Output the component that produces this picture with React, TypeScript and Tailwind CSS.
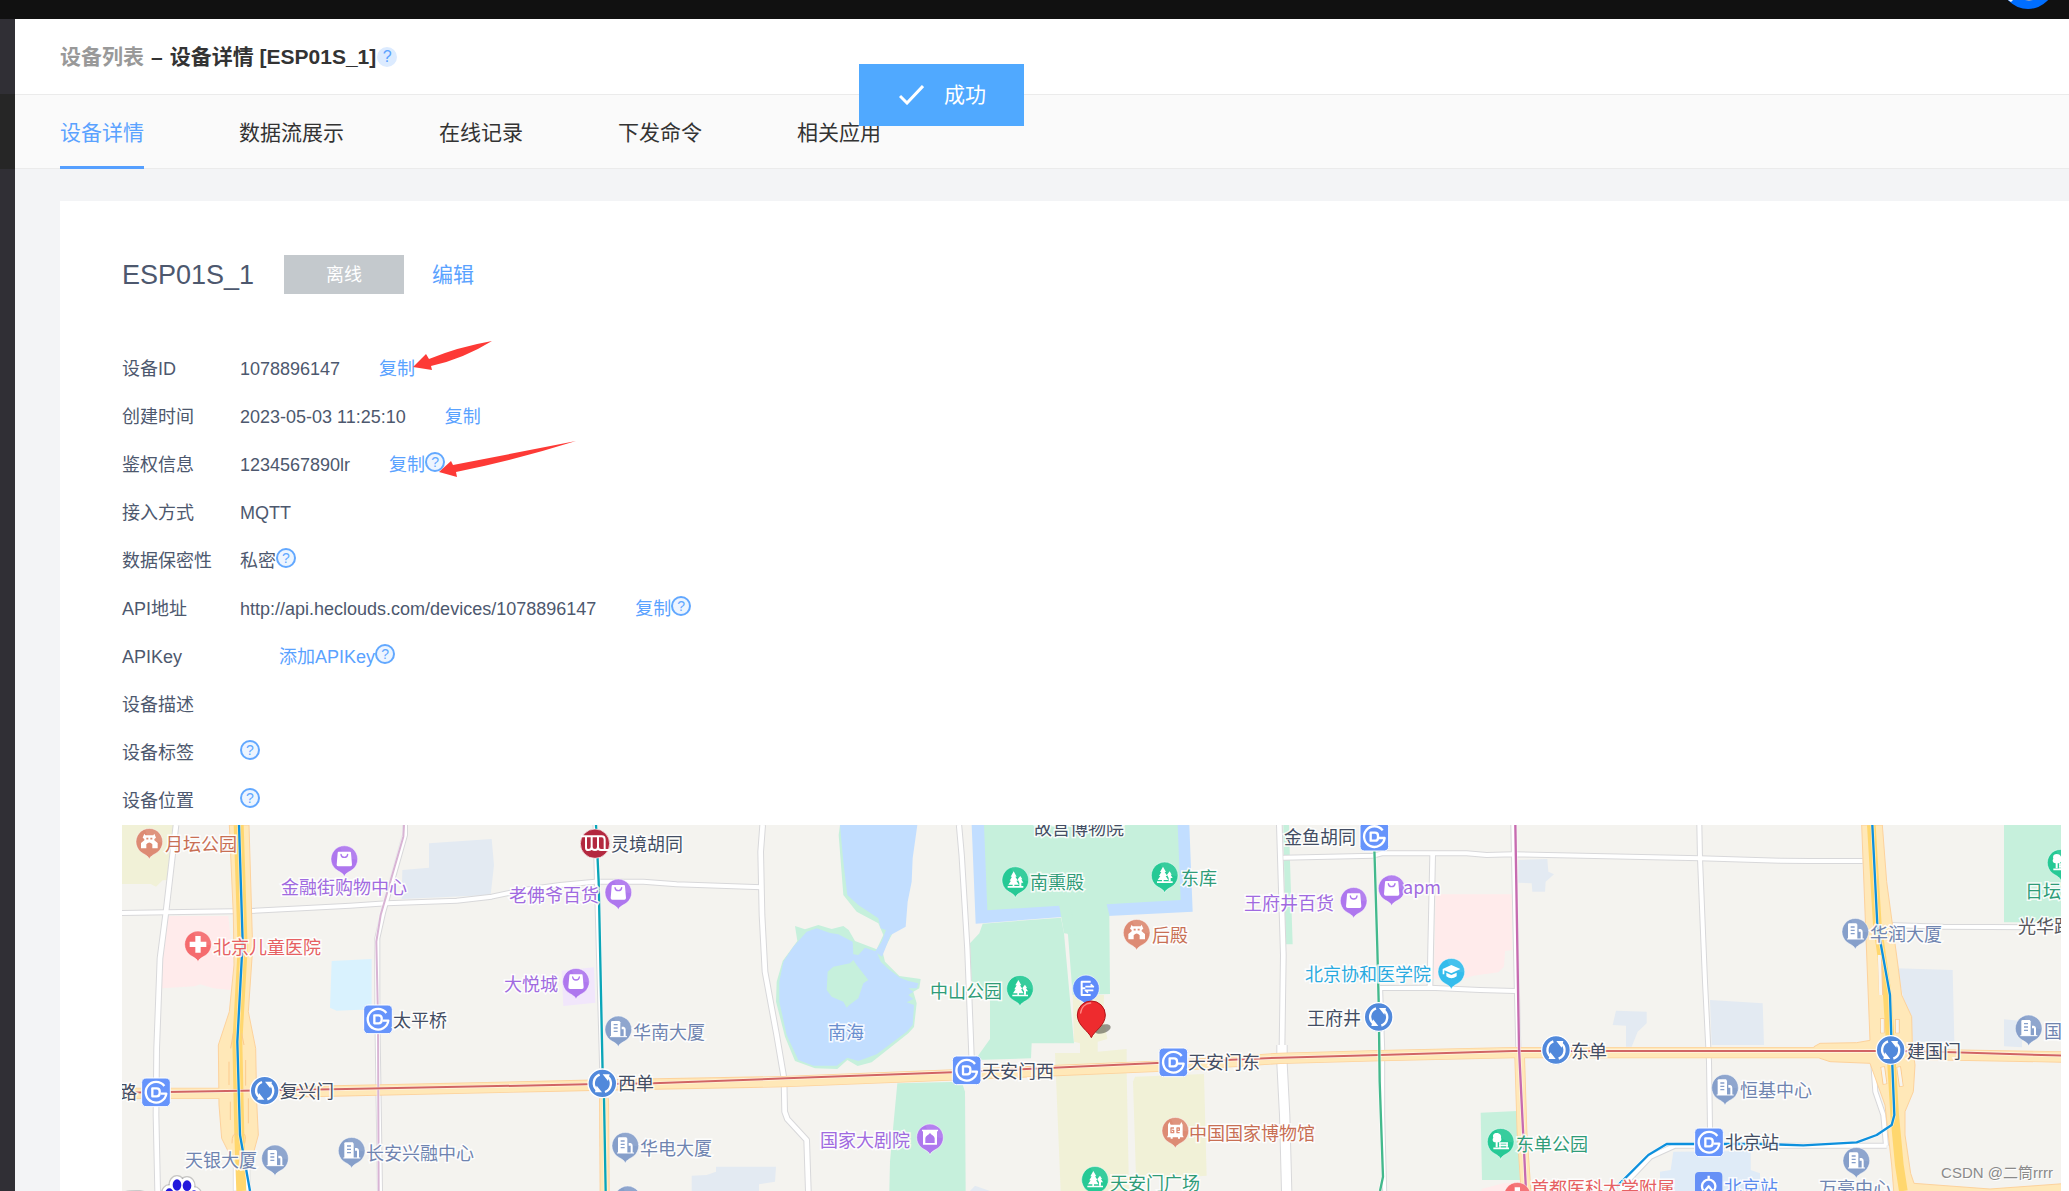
import React from "react";

/* ---------- map data (map units: three units to one CSS pixel) ---------- */

const ORIGIN_X = 36;
const ORIGIN_Y = 30;

type Area = { fill: string; dx?: number; pts: string };

const GREEN = "#c6f0dc";
const WATER = "#c2deff";
const SLATE = "#e3eaf2";
const SAND = "#f1f1d7";
const BASE = "#f4f3ef";

const areas: Area[] = [
  { fill: SAND, pts: "36,30 190,30 180,195 158,196 138,215 122,207 36,207" },
  { fill: SLATE, pts: "957,85 1145,72 1152,150 1142,240 875,252 877,165 957,158" },
  { fill: "#ffebeb", pts: "175,303 355,303 370,450 362,525 310,520 270,508 255,514 155,520 158,430" },
  { fill: "#d9f2fe", pts: "665,438 785,432 785,583 680,587 660,578" },
  { fill: "#f1e6fb", pts: "1355,467 1452,457 1456,563 1360,573" },
  // lakes and their banks
  { fill: GREEN, dx: 1350, pts: "705,333 735,343 775,330 815,342 850,333 866,345 885,378 950,403 970,360 955,325 890,290 850,240 836,60 840,30 1000,30 1000,350 968,412 975,440 1018,483 1082,492 1078,520 1060,530 1070,565 1062,636 1045,655 935,742 893,753 862,735 832,762 765,760 705,738 675,665 648,560 650,500 668,438 712,378" },
  { fill: WATER, dx: 1350, pts: "840,30 1072,30 1058,130 1055,200 1043,260 1037,335 992,360 966,425 945,410 965,380 978,345 962,340 955,310 895,270 862,240 850,140" },
  { fill: WATER, dx: 1350, pts: "770,340 810,354 835,358 878,380 880,418 895,420 915,398 950,410 962,440 985,462 1020,488 1045,498 1075,505 1070,520 1045,520 1060,530 1045,540 1060,552 1040,562 1062,570 1058,630 1040,650 950,718 895,738 862,728 830,752 760,752 715,735 680,660 658,560 658,500 670,440 700,395 740,350" },
  { fill: GREEN, dx: 1350, pts: "803,470 820,455 870,445 880,435 890,450 925,495 910,505 895,550 868,570 860,578 850,560 815,545 800,525" },
  { fill: GREEN, dx: 1350, pts: "1012,805 1205,800 1215,830 1217,1128 988,1128 990,1040 1003,900" },
  { fill: SLATE, dx: 1350, pts: "468,1055 648,1055 645,1100 597,1108 597,1128 395,1128 395,1082 440,1080 468,1070" },
  // palace museum, moat and gardens
  { fill: WATER, dx: 2460, pts: "125,30 778,30 788,290 533,303 395,306 137,326" },
  { fill: GREEN, dx: 2460, pts: "162,30 743,30 752,255 530,268 538,300 540,537 428,540 414,360 388,272 172,286" },
  { fill: GREEN, dx: 2460, pts: "158,326 393,308 402,355 432,685 305,685 303,730 135,735 180,672 180,555 125,500 120,385 148,355" },
  { fill: GREEN, dx: 2460, pts: "388,272 420,272 440,360 402,355" },
  { fill: SAND, dx: 2460, pts: "428,540 522,540 520,600 532,672 503,680 503,710 590,702 590,770 597,1128 392,1128 375,714 450,714 450,685 432,680" },
  { fill: SAND, dx: 2460, pts: "615,785 822,777 830,1082 710,1090 618,1088 609,800" },
  { fill: SLATE, dx: 2460, pts: "120,1128 135,1112 180,1128" },
  { fill: GREEN, dx: 2460, pts: "1060,30 1077,30 1080,140 1088,388 1067,388" },
  { fill: "#ffebeb", dx: 3510, pts: "467,238 697,238 697,405 675,408 672,455 655,472 580,482 520,500 462,490" },
  { fill: SLATE, dx: 3510, pts: "715,135 802,132 805,170 822,178 797,200 795,230 757,230 755,205 715,203" },
  { fill: SLATE, dx: 3510, pts: "1008,587 1100,590 1100,625 1073,650 1055,695 1038,695 1038,632 998,630" },
  { fill: SLATE, dx: 3510, pts: "1290,555 1448,565 1452,690 1295,690" },
  { fill: GREEN, dx: 3510, pts: "602,893 712,888 720,1095 606,1095" },
  { fill: "#ffebeb", dx: 3510, pts: "605,1122 670,1105 720,1105 720,1128 605,1128" },
  { fill: "#dfebf7", dx: 3510, pts: "1180,1010 1412,1008 1412,1065 1440,1075 1440,1128 1140,1128 1140,1070 1172,1065" },
  { fill: SLATE, dx: 4590, pts: "770,460 938,465 943,680 820,680" },
  { fill: GREEN, dx: 4590, pts: "1092,30 1270,30 1270,322 1092,322" },
  { fill: SLATE, dx: 4590, pts: "1092,613 1146,618 1146,697 1092,694" },
];

type Line = { pts: string; w: number };

const whiteRoads: Line[] = [
  { w: 14, pts: "198,30 168,290 150,430 140,700 138,900 143,1128" },
  { w: 12, pts: "36,294 170,292 420,288 720,272 830,265 1040,257 1145,245 1240,225 1350,210 1455,200 1600,200 1700,208 1955,217" },
  { w: 12, pts: "885,30 885,60 820,290 802,370 802,600 810,1128" },
  { w: 9, pts: "1455,30 1462,300 1475,760" },
  { w: 14, pts: "1958,30 1952,110 1956,300 1965,470 2000,660 2022,790 2024,890 2032,912 2090,975 2095,1128" },
  { w: 13, pts: "2547,30 2555,120 2572,400 2586,760" },
  { w: 14, pts: "3508,30 3520,420 3516,700" },
  { w: 28, pts: "3516,690 3516,745 3524,900 3530,1128" },
  { w: 12, pts: "3520,128 3790,122 3815,115 4070,115 4130,120 4210,118 4770,130 5010,137 5100,138 5258,138" },
  { w: 12, pts: "4210,30 4220,500 4225,700" },
  { w: 14, pts: "3968,120 3962,400 3960,515" },
  { w: 12, pts: "3810,519 3960,518 4110,525 4215,528" },
  { w: 9, pts: "3812,525 3818,700 3818,900 3824,1128" },
  { w: 12, pts: "4768,30 4770,130 4785,500 4797,740 4800,940" },
  { w: 12, pts: "5335,330 5500,335 5860,337" },
  { w: 12, pts: "4530,1122 4622,1025 4695,992 4760,992 5330,992" },
  { w: 12, pts: "5290,745 5296,830 5320,900 5328,992" },
];

const yellowRoads: Line[] = [
  { w: 30, pts: "36,835 330,835 670,828 1350,813 1477,810 2020,800 2570,778 3190,752 3510,730 3810,722 4210,713 5340,713 5420,718 5860,726" },
  { w: 26, pts: "1482,850 1484,1128" },
  { w: 28, pts: "4229,725 4236,950 4248,1128" },
];

const westRing =
  "358,30 417,30 428,400 415,590 437,700 440,860 445,960 418,1060 380,1060 335,970 327,870 325,690 358,590 372,450 370,300";
const eastRing =
  "5255,30 5317,30 5330,200 5365,460 5375,540 5405,605 5407,690 5415,750 5410,830 5385,890 5385,960 5402,1075 5412,1105 5640,1122 5860,1106 5860,1140 5352,1140 5345,1050 5325,870 5280,745 5160,740 5130,730 5110,713 5112,695 5130,685 5240,683 5280,676";

type Rail = { c: string; w: number; pts: string };
const rails: Rail[] = [
  { c: "#d8b4d4", w: 6, pts: "882,30 880,65 812,300 799,380 804,613 806,1128" },
  { c: "#0aa5b8", w: 7, pts: "1458,30 1466,200 1478,780 1482,850 1487,1128" },
  { c: "#d16464", w: 6, pts: "36,833 464,826 670,823 1430,808 1630,805 2030,790 2570,770 2830,758 3190,742 3510,728 3810,720 4210,708 5342,708 5480,710 5860,722" },
  { c: "#c76bb0", w: 7, pts: "4216,30 4227,700 4248,1128" },
  { c: "#43b98c", w: 7, pts: "3793,100 3802,400 3806,560 3809,800 3819,1085 3810,1128" },
  { c: "#0d90dd", w: 7, pts: "387,30 398,380 382,680 390,960 420,1128" },
  { c: "#0d90dd", w: 7, pts: "5287,30 5302,330 5340,540 5345,700 5353,900 5345,930 5300,960 5240,982 5080,991 4960,987 4670,987 4615,1020 4520,1115" },
];

type PinKind = "gate" | "bag" | "cross" | "building" | "tree" | "theatre" | "museum" | "school" | "park";
const pinColor: Record<PinKind, string> = {
  gate: "#dd8b74",
  museum: "#dd8b74",
  bag: "#ae77ee",
  theatre: "#ae77ee",
  cross: "#f56b6e",
  building: "#869fca",
  tree: "#26c995",
  park: "#26c995",
  school: "#35bcec",
};
const pins: [PinKind, number, number][] = [
  ["gate", 118, 80],
  ["bag", 703, 132],
  ["cross", 264, 388],
  ["bag", 1398, 500],
  ["building", 495, 1030],
  ["building", 725, 1007],
  ["bag", 1525, 232],
  ["building", 1525, 643],
  ["building", 1546, 992],
  ["building", 1553, 1153],
  ["theatre", 2460, 967],
  ["tree", 2716, 195],
  ["tree", 3164, 181],
  ["tree", 2730, 521],
  ["tree", 2955, 1094],
  ["gate", 3080, 353],
  ["museum", 3196, 947],
  ["bag", 3731, 257],
  ["bag", 3845, 220],
  ["school", 4024, 470],
  ["park", 4172, 980],
  ["cross", 4222, 1142],
  ["building", 4845, 818],
  ["building", 5236, 350],
  ["building", 5756, 640],
  ["building", 5239, 1037],
  ["park", 5852, 143],
];

const stations: [number, number][] = [
  [138, 832],
  [804, 613],
  [2570, 766],
  [3190, 742],
  [3793, 65],
  [4797, 982],
];
const interchanges: [number, number][] = [
  [464, 827],
  [1477, 805],
  [3806, 606],
  [4338, 705],
  [5342, 705],
];

const INK = "text-[#434d63]";
const BROWN = "text-[#c86f54]";
const PURPLE = "text-[#a06ae0]";
const PINE = "text-[#2f9c78]";
const STEEL = "text-[#6f84b0]";
const RED = "text-[#e66062]";

const labels: [string, number, number, string][] = [
  ["月坛公园", 165, 83, BROWN],
  ["金融街购物中心", 512, 213, PURPLE],
  ["北京儿童医院", 309, 393, RED],
  ["老佛爷百货", 1197, 236, PURPLE],
  ["大悦城", 1181, 505, PURPLE],
  ["太平桥", 848, 611, INK],
  ["复兴门", 511, 824, INK],
  ["路", 26, 828, INK],
  ["天银大厦", 225, 1033, STEEL],
  ["长安兴融中心", 769, 1012, STEEL],
  ["灵境胡同", 1502, 83, INK],
  ["华南大厦", 1569, 647, STEEL],
  ["西单", 1523, 800, INK],
  ["华电大厦", 1591, 996, STEEL],
  ["南海", 2155, 649, "text-[#6a8fcf]"],
  ["中山公园", 2459, 526, PINE],
  ["国家大剧院", 2130, 971, PURPLE],
  ["天安门西", 2615, 764, INK],
  ["故宫博物院", 2772, 37, INK],
  ["南熏殿", 2760, 199, PINE],
  ["东库", 3212, 186, PINE],
  ["后殿", 3125, 357, BROWN],
  ["王府井百货", 3403, 262, PURPLE],
  ["天安门东", 3235, 739, INK],
  ["中国国家博物馆", 3238, 952, BROWN],
  ["天安门广场", 2999, 1100, PINE],
  ["金鱼胡同", 3521, 62, INK],
  ["apm", 3880, 214, PURPLE],
  ["北京协和医学院", 3584, 473, "text-[#2aaae0]"],
  ["王府井", 3592, 605, INK],
  ["东单", 4384, 704, INK],
  ["东单公园", 4219, 984, PINE],
  ["首都医科大学附属", 4264, 1115, RED],
  ["恒基中心", 4891, 821, STEEL],
  ["北京站", 4844, 979, INK],
  ["北京站", 4841, 1114, "text-[#5b8cee]"],
  ["华润大厦", 5280, 354, STEEL],
  ["建国门", 5390, 705, INK],
  ["万豪中心", 5128, 1116, STEEL],
  ["日坛", 5744, 226, PINE],
  ["光华路", 5724, 331, "text-[#55565c]"],
  ["国", 5801, 644, STEEL],
];

/* ---------- map drawing ---------- */

function PinGlyph({ kind }: { kind: PinKind }) {
  const color = pinColor[kind];
  switch (kind) {
    case "bag":
      return (
        <g>
          <path d="M-17 -22 H17 Q20 -22 20 -18 L23 17 Q23 22 18 22 H-18 Q-23 22 -23 17 L-20 -18 Q-20 -22 -17 -22Z" fill="#fff" />
          <path d="M-10 -14 C-9 -2 9 -2 10 -14" fill="none" stroke={color} strokeWidth="4" strokeLinecap="round" />
        </g>
      );
    case "cross":
      return <path d="M-8 -25 H8 V-8 H25 V8 H8 V25 H-8 V8 H-25 V-8 H-8Z" fill="#fff" />;
    case "building":
      return (
        <g>
          <path d="M-22 22 V-22 Q-22 -25 -18 -25 H3 L6 -21 V22Z" fill="#fff" />
          <path d="M10 -8 H16 Q22 -6 22 0 V22 H16 V0 H10Z" fill="#fff" />
          <path d="M-14 -14 H-2 M-14 -4 H-2 M-14 6 H-2" stroke={color} strokeWidth="4" />
          <path d="M-25 22 H26" stroke="#fff" strokeWidth="3" />
        </g>
      );
    case "tree":
      return (
        <g fill="#fff">
          <path d="M-5 -26 L4 -10 H0 L8 2 H3 L11 14 H-3 V18 H24 V23 H-23 V18 H-8 V14 H-21 L-13 2 H-17 L-10 -10 H-14Z" />
          <path d="M15 -12 L21 -2 H18 L24 8 H18 V18 H12 V8 L7 -2Z" />
        </g>
      );
    case "gate":
      return (
        <g>
          <path d="M-15 -24 L-12 -19 H12 L15 -24 L20 -12 L15 -8 V-4 L25 4 V20 H9 V8 Q0 -3 -9 8 V20 H-25 V4 L-15 -4 V-8 L-20 -12Z" fill="#fff" />
          <path d="M-9 -9 H-3 M3 -9 H9" stroke={color} strokeWidth="5" />
        </g>
      );
    case "museum":
      return (
        <g>
          <path d="M-22 -18 L-18 -26 L-14 -18 H14 L18 -26 L22 -18 V14 L25 20 H14 V24 H8 V20 H-8 V24 H-14 V20 H-25 L-22 14Z" fill="#fff" />
          <path d="M-4 -8 H-13 V6 H-5 V-1 H-10 M5 -1 H12 V-8 H5 V6 H13" fill="none" stroke={color} strokeWidth="4" />
        </g>
      );
    case "theatre":
      return (
        <g>
          <path d="M-24 -23 H24 V-18 H21 V22 H-21 V-18 H-24Z" fill="#fff" />
          <path d="M0 -14 C3 -7 13 -6 14 3 V17 H-14 V3 C-13 -6 -3 -7 0 -14Z" fill={color} />
        </g>
      );
    case "school":
      return (
        <g fill="#fff">
          <path d="M0 -20 L27 -8 L0 5 L-21 -4 V8 H-26 V-8Z" />
          <path d="M-15 3 L0 10 L16 3 V14 Q0 26 -15 14Z" />
        </g>
      );
    case "park":
      return (
        <g>
          <path d="M-12 -26 C-2 -26 3 -18 1 -12 C5 -4 -2 3 -9 2 V17 H-15 V2 C-24 2 -26 -7 -22 -12 C-25 -20 -20 -26 -12 -26Z" fill="#fff" />
          <path d="M-5 4 H22 M-5 11 H22 M-22 20 H25" stroke="#fff" strokeWidth="5" />
          <path d="M-2 4 V20 M19 4 V20" stroke="#fff" strokeWidth="4" />
        </g>
      );
  }
}

function Pin({ kind, x, y }: { kind: PinKind; x: number; y: number }) {
  return (
    <g transform={`translate(${x} ${y})`}>
      <path
        d="M0 53 C-3 43 -10 41 -18 36 A40 40 0 1 1 18 36 C10 41 3 43 0 53Z"
        fill={pinColor[kind]}
        stroke="#fff"
        strokeWidth="2"
        strokeOpacity="0.7"
      />
      <path d="M-13 -38 A40 40 0 0 1 40 3 C22 2 -10 -10 -13 -38Z" fill="#fff" opacity="0.08" />
      <PinGlyph kind={kind} />
    </g>
  );
}

function Station({ x, y }: { x: number; y: number }) {
  return (
    <g transform={`translate(${x} ${y})`}>
      <rect x="-43" y="-43" width="86" height="86" rx="13" fill="#6694fb" stroke="#fff" strokeWidth="3" />
      <path d="M25 -19 A31 31 0 1 0 31 4 H14" fill="none" stroke="#fff" strokeWidth="7" />
      <path d="M-11 -12 H2 Q11 -12 11 -3 V3 Q11 12 2 12 H-11Z" fill="none" stroke="#fff" strokeWidth="7" />
    </g>
  );
}

function Interchange({ x, y }: { x: number; y: number }) {
  return (
    <g transform={`translate(${x} ${y})`}>
      <circle r="43" fill="#5189db" stroke="#fff" strokeWidth="4" />
      <path d="M-8 -26 A27 27 0 0 0 -16 20" fill="none" stroke="#fff" strokeWidth="7" />
      <path d="M8 26 A27 27 0 0 0 16 -20" fill="none" stroke="#fff" strokeWidth="7" />
      <path d="M-22 27 L-17 7 L-1 27Z M22 -27 L17 -7 L1 -27Z" fill="#fff" />
    </g>
  );
}

function MapDrawing() {
  return (
    <svg
      aria-hidden="true"
      viewBox="36 30 5817 1098"
      className="absolute left-0 top-0 h-[366px] w-[1939px] max-w-none"
      strokeLinejoin="round"
    >
      <rect x="36" y="30" width="5817" height="1098" fill={BASE} />
      {areas.map((a, i) => (
        <polygon key={i} points={a.pts} fill={a.fill} transform={`translate(${a.dx ?? 0} 0)`} />
      ))}
      <g fill="none">
        {whiteRoads.map((r, i) => (
          <polyline key={i} points={r.pts} stroke="#d8d8da" strokeWidth={r.w + 6} />
        ))}
        {whiteRoads.map((r, i) => (
          <polyline key={i} points={r.pts} stroke="#ffffff" strokeWidth={r.w} />
        ))}
        {yellowRoads.map((r, i) => (
          <polyline key={i} points={r.pts} stroke="#fdd29c" strokeWidth={r.w + 4} />
        ))}
      </g>
      <rect x="370" y="1040" width="50" height="88" fill="#fff" stroke="#d8d8da" strokeWidth="2" />
      <polygon points={westRing} fill="#ffe8b8" stroke="#fdd29c" strokeWidth="3" />
      <polygon points={eastRing} fill="#ffe8b8" stroke="#fdd29c" strokeWidth="3" />
      <g fill="none">
        {yellowRoads.map((r, i) => (
          <polyline key={i} points={r.pts} stroke="#ffe8b8" strokeWidth={r.w - 1} />
        ))}
        <polyline points="386,30 398,400 382,680 388,960 394,1128" stroke="#ffd76e" strokeWidth="30" />
        <polyline points="5284,30 5302,330 5332,540 5342,700 5354,900 5368,1050 5380,1128" stroke="#ffd76e" strokeWidth="26" />
        <path
          d="M357 740V810 M407 735V812 M361 860V915 M415 850V925 M362 700L370 655 M395 655L402 690 M366 985Q366 950 382 958 M400 955Q410 960 404 985"
          stroke="#fcca8d"
          strokeWidth="3"
        />
        <path
          d="M5310 430L5314 540 M5317 610V655 M5362 612V655 M5318 755L5325 808 M5366 755L5374 815"
          stroke="#fcca8d"
          strokeWidth="14"
        />
        <path
          d="M5308 420L5312 540 M5317 612V653 M5362 614V653 M5318 757L5325 806 M5366 757L5374 813"
          stroke="#f7f5f0"
          strokeWidth="9"
        />
        {rails.map((r, i) => (
          <g key={i}>
            <polyline points={r.pts} stroke="#fff" strokeOpacity="0.6" strokeWidth={r.w + 4} />
            <polyline points={r.pts} stroke={r.c} strokeWidth={r.w} />
          </g>
        ))}
      </g>

      {stations.map(([x, y]) => (
        <Station key={`${x}-${y}`} x={x} y={y} />
      ))}
      {interchanges.map(([x, y]) => (
        <Interchange key={`${x}-${y}`} x={x} y={y} />
      ))}

      <g transform="translate(1455 86)">
        <circle r="44" fill="#b3283f" stroke="#fff" strokeWidth="2" />
        <path
          d="M-42 -22 H20 Q29 -22 29 -12 V19 H43 M-27 -22 V12 Q-27 19 -20 19 Q-10 19 -10 10 V-22 M-10 10 Q-10 19 0 19 Q9 19 9 10 V-22 M9 10 Q9 19 18 19 H29"
          fill="none"
          stroke="#fff"
          strokeWidth="6"
        />
      </g>

      <g transform="translate(4796 1112)">
        <rect x="-41" y="-41" width="82" height="82" rx="12" fill="#6690f6" />
        <path d="M-16 14 A20 20 0 1 1 16 14 M0 -30 V-20 M-12 16 L0 2 L12 16" fill="none" stroke="#fff" strokeWidth="7" />
      </g>

      {pins.map(([kind, x, y]) => (
        <Pin key={`${x}-${y}`} kind={kind} x={x} y={y} />
      ))}

      <g transform="translate(2928 520)">
        <path d="M0 53 C-3 43 -10 41 -18 36 A40 40 0 1 1 18 36 C10 41 3 43 0 53Z" fill="#5f8bfa" stroke="#fff" strokeWidth="2" />
        <path d="M14 -20 H-13 V20 H14 M-13 0 H-2" fill="none" stroke="#fff" strokeWidth="6" />
        <path d="M-2 -5 H22 L14 -12 M22 6 H-2 L6 13" fill="none" stroke="#fff" strokeWidth="5" />
      </g>

      <g transform="translate(2944 600)">
        <ellipse cx="34" cy="42" rx="25" ry="13" fill="#55554a" opacity="0.6" transform="rotate(-18 34 42)" />
        <path d="M0 68 C-8 48 -42 32 -42 0 A42 42 0 0 1 42 0 C42 32 8 48 0 68Z" fill="#ee2b2e" stroke="#b01217" strokeWidth="3" />
        <path d="M-32 -6 C-30 -26 -16 -35 -2 -36" fill="none" stroke="#ff8a85" strokeWidth="4" strokeLinecap="round" />
      </g>

      <g fill="#9a9a9a" stroke="#9a9a9a" strokeOpacity="0.5" strokeWidth="26">
        <ellipse cx="178" cy="1134" rx="12" ry="14" />
        <ellipse cx="252" cy="1140" rx="12" ry="14" />
        <ellipse cx="201" cy="1110" rx="13" ry="17" />
        <ellipse cx="231" cy="1112" rx="13" ry="16" />
      </g>
      <g fill="#fff" stroke="#fff" strokeWidth="18">
        <ellipse cx="178" cy="1134" rx="12" ry="14" />
        <ellipse cx="252" cy="1140" rx="12" ry="14" />
        <ellipse cx="201" cy="1110" rx="13" ry="17" />
        <ellipse cx="231" cy="1112" rx="13" ry="16" />
      </g>
      <g fill="#2319dc">
        <ellipse cx="178" cy="1134" rx="12" ry="14" />
        <ellipse cx="252" cy="1140" rx="12" ry="14" />
        <ellipse cx="201" cy="1110" rx="13" ry="17" />
        <ellipse cx="231" cy="1112" rx="13" ry="16" />
      </g>
      <path d="M46 1128 Q60 1124 90 1125 L104 1128Z" fill="#c9c9c9" />
    </svg>
  );
}

function DeviceMap() {
  return (
    <div className="relative mr-2 min-h-[366px] flex-1 overflow-hidden bg-[#f4f3ef]">
      <MapDrawing />
      {labels.map(([text, x, y, color], i) => (
        <span
          key={i}
          className={`absolute -translate-y-1/2 whitespace-nowrap font-['Noto_Sans_CJK_SC',sans-serif] text-lg leading-6 [-webkit-text-stroke:3px_rgba(255,255,255,0.85)] [paint-order:stroke] ${color}`}
          style={{ left: Math.round((x - ORIGIN_X) / 3), top: Math.round((y - ORIGIN_Y) / 3) }}
        >
          {text}
        </span>
      ))}
    </div>
  );
}

/* ---------- page ---------- */

function Help() {
  return (
    <button
      type="button"
      aria-label="帮助"
      className="flex size-5 shrink-0 items-center justify-center rounded-full border-2 border-[#62a8ff] bg-[#edf5ff] text-sm leading-none text-[#62a8ff]"
    >
      ?
    </button>
  );
}

type Info = { label: string; value?: string; action?: string; help?: boolean; arrow?: "short" | "long" };

const info: Info[] = [
  { label: "设备ID", value: "1078896147", action: "复制", arrow: "short" },
  { label: "创建时间", value: "2023-05-03 11:25:10", action: "复制" },
  { label: "鉴权信息", value: "1234567890lr", action: "复制", help: true, arrow: "long" },
  { label: "接入方式", value: "MQTT" },
  { label: "数据保密性", value: "私密", help: true },
  { label: "API地址", value: "http://api.heclouds.com/devices/1078896147", action: "复制", help: true },
  { label: "APIKey", action: "添加APIKey", help: true },
  { label: "设备描述" },
  { label: "设备标签", help: true },
  { label: "设备位置", help: true },
];

function Arrow({ kind }: { kind: "short" | "long" }) {
  return kind === "short" ? (
    <svg aria-hidden="true" viewBox="0 0 80 30" className="absolute -top-1 left-[34px] h-[30px] w-20">
      <path d="M0 26 L13 13 L16 18 Q45 6 79 0 Q50 18 18 25 L19 29Z" fill="#fd3a36" />
    </svg>
  ) : (
    <svg aria-hidden="true" viewBox="0 0 138 38" className="absolute left-[50px] top-0 z-10 h-[38px] w-[138px]">
      <path d="M0 31 L12 20 L14 24 L137 0 Q80 18 17 31 L18 36Z" fill="#fd3a36" />
    </svg>
  );
}

function InfoRow({ label, value, action, help, arrow }: Info) {
  return (
    <div className="flex h-12 items-center">
      <dt className="w-[118px] shrink-0">{label}</dt>
      <dd className="flex items-center">
        {value && <span>{value}</span>}
        {action && (
          <span className="relative ml-[39px] flex h-12 items-center">
            <button type="button" className="text-[#5aa2ff]">
              {action}
            </button>
            {arrow && <Arrow kind={arrow} />}
          </span>
        )}
        {help && (
          <span className="pb-1.5">
            <Help />
          </span>
        )}
      </dd>
    </div>
  );
}

const tabs = ["设备详情", "数据流展示", "在线记录", "下发命令", "相关应用"];

export default function App() {
  return (
    <div className="relative flex h-screen flex-col overflow-hidden bg-white font-['Liberation_Sans','Noto_Sans_CJK_SC',sans-serif] text-lg leading-6 text-[#4d586e]">
      <div className="flex h-[19px] shrink-0 justify-end overflow-hidden bg-[#111111] pr-3.5">
        <svg aria-hidden="true" viewBox="0 0 54 19" className="h-[19px] w-[54px]">
          <circle cx="27" cy="-18" r="27" fill="#006eff" />
          <path d="M7 0 H12 L10 2Z" fill="#e8eef5" />
          <path d="M24 0 H32 L28 1Z" fill="#8da0c4" />
        </svg>
      </div>

      <div className="flex min-h-0 flex-1">
        <aside className="flex w-[15px] shrink-0 flex-col bg-[#302f35]">
          <div className="mt-[75px] h-[75px] bg-[#262626]" />
        </aside>

        <main className="flex min-w-0 flex-1 flex-col bg-[#f3f4f6]">
          <header className="flex h-[75px] shrink-0 items-center bg-white pl-[45px] text-[21px] font-bold leading-7 text-[#333333]">
            <a href="#devices" className="text-[#999999]">
              设备列表
            </a>
            <span className="mx-[7px]">–</span>
            <h1>设备详情 [ESP01S_1]</h1>
            <button
              type="button"
              aria-label="帮助"
              className="ml-px flex size-5 items-center justify-center rounded-full bg-[#dcebff] text-base font-normal leading-none text-[#5aa2ff]"
            >
              ?
            </button>
          </header>

          <nav className="flex h-[75px] shrink-0 gap-[95px] border-y border-[#ebebeb] bg-[#fafafa] pl-[45px] text-[21px] leading-7 text-[#333333]">
            {tabs.map((t, i) => (
              <button
                key={t}
                type="button"
                className={
                  i === 0
                    ? "-mb-px border-b-3 border-[#559fff] pt-[5px] text-[#5aa2ff]"
                    : "-mb-px border-b-3 border-transparent pt-[5px]"
                }
              >
                {t}
              </button>
            ))}
          </nav>

          <section className="ml-[45px] mt-8 flex min-h-0 flex-1 flex-col bg-white pl-[62px] pt-[54px]">
            <div className="flex h-[39px] shrink-0 items-center">
              <h2 className="text-[27px] leading-8">ESP01S_1</h2>
              <span className="ml-[30px] flex h-full w-[120px] items-center justify-center bg-[#c4c9cd] text-white">离线</span>
              <button type="button" className="ml-7 text-[21px] leading-7 text-[#5aa2ff]">
                编辑
              </button>
            </div>
            <dl className="mt-[51px]">
              {info.map((row) => (
                <InfoRow key={row.label} {...row} />
              ))}
            </dl>
            <DeviceMap />
          </section>
        </main>
      </div>

      <div role="status" className="absolute left-[859px] top-16 flex h-[62px] w-[165px] items-center bg-[#50a9ff] pl-10 text-[21px] leading-7 text-white">
        <svg aria-hidden="true" viewBox="0 0 25 20" className="mr-5 h-5 w-[25px]" fill="none" stroke="#fff" strokeWidth="3">
          <path d="M1 11 L8 18 L24 1" />
        </svg>
        成功
      </div>

      <p className="absolute bottom-1.5 right-4 text-[15px] leading-6 text-[#8a8a8a] [text-shadow:1px_1px_0_#ffffff]">CSDN @二筒rrrr</p>
    </div>
  );
}
